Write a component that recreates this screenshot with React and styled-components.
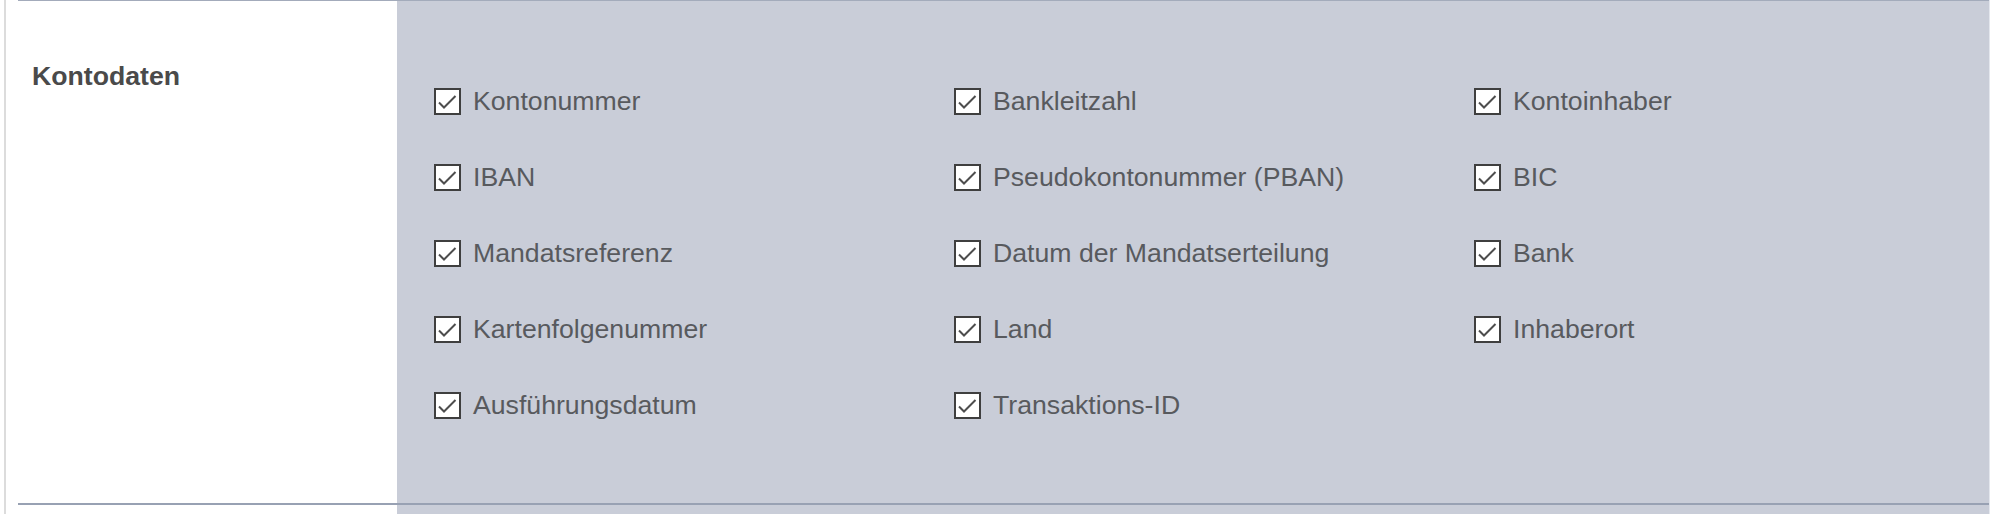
import styled, { createGlobalStyle } from 'styled-components'

const GlobalStyle = createGlobalStyle`
  html, body {
    margin: 0;
    padding: 0;
    background: #fff;
  }
  body {
    font-family: "Liberation Sans", Arial, sans-serif;
  }
`

const fields = [
  'Kontonummer', 'Bankleitzahl', 'Kontoinhaber',
  'IBAN', 'Pseudokontonummer (PBAN)', 'BIC',
  'Mandatsreferenz', 'Datum der Mandatserteilung', 'Bank',
  'Kartenfolgenummer', 'Land', 'Inhaberort',
  'Ausführungsdatum', 'Transaktions-ID',
]

function App(){
  return(
    <>
      <GlobalStyle />
      <Frame>
        <Row>
          <LabelCell>Kontodaten</LabelCell>
          <Panel>
            <Grid>
              {fields.map(f => (
                <Option key={f}>
                  <Box>
                    <svg width="23" height="23" viewBox="0 0 23 23">
                      <path d="M3 12.5 L8 17.5 L19.5 6" fill="none" stroke="#4d4d4d" strokeWidth="2" />
                    </svg>
                  </Box>
                  <span>{f}</span>
                </Option>
              ))}
            </Grid>
          </Panel>
        </Row>
        <Row $next>
          <LabelCell />
          <Panel />
        </Row>
      </Frame>
    </>
  )
}

const Frame = styled.div`
  margin-left: 4px;
  width: 1986px;
  border-left: 2px solid #dcdcdc;
  border-right: 1px solid #e4e7ee;
  box-sizing: border-box;
  height: 514px;
  overflow: hidden;
  padding-left: 12px;
`

const Row = styled.div`
  display: grid;
  grid-template-columns: 379px 1fr;
  border-top: ${p => p.$next ? 'none' : '1px solid #a3abbb'};
  border-bottom: ${p => p.$next ? 'none' : '2px solid #98a1b3'};
  height: ${p => p.$next ? '40px' : '502px'};
`

const LabelCell = styled.div`
  background: #fff;
  padding: 60px 0 0 14px;
  font-size: 26.67px;
  font-weight: bold;
  color: #4a4a4a;
`

const Panel = styled.div`
  background: #c9cdd8;
`

const Grid = styled.div`
  display: grid;
  grid-template-columns: repeat(3, 520px);
  grid-auto-rows: 76px;
  padding: 60px 0 0 37px;
`

const Option = styled.label`
  display: flex;
  align-items: center;
  gap: 12px;
  font-size: 26.67px;
  color: #585a5e;
  span {
    position: relative;
    top: 2px;
  }
`

const Box = styled.span`
  width: 27px;
  height: 27px;
  box-sizing: border-box;
  border: 2px solid #3f3f3f;
  background: #fff;
  display: flex;
  align-items: center;
  justify-content: center;
`

export default App
